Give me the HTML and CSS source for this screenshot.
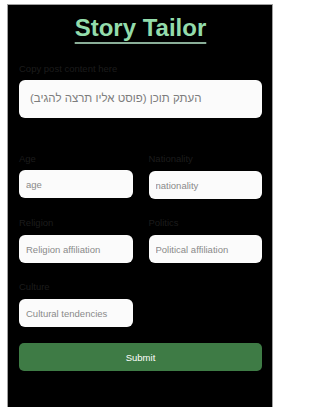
FILE: index.html
```html
<!DOCTYPE html>
<html lang="en">
<head>
<meta charset="utf-8">
<title>Story Tailor</title>
<link rel="stylesheet" href="styles.css">
</head>
<body>
<main class="panel">
  <h1 class="title"><span class="title-text">Story Tailor</span></h1>
  <form class="form">
    <div class="field">
      <label class="label" for="post">Copy post content here</label>
      <textarea id="post" class="post" placeholder="העתק תוכן (פוסט אליו תרצה להגיב)"></textarea>
    </div>
    <div class="grid">
      <div class="field">
        <label class="label" for="age">Age</label>
        <input id="age" class="input" type="text" placeholder="age">
      </div>
      <div class="field">
        <label class="label" for="nat">Nationality</label>
        <input id="nat" class="input" type="text" placeholder="nationality">
      </div>
      <div class="field">
        <label class="label" for="rel">Religion</label>
        <input id="rel" class="input" type="text" placeholder="Religion affiliation">
      </div>
      <div class="field">
        <label class="label" for="pol">Politics</label>
        <input id="pol" class="input" type="text" placeholder="Political affiliation">
      </div>
      <div class="field">
        <label class="label" for="cul">Culture</label>
        <input id="cul" class="input" type="text" placeholder="Cultural tendencies">
      </div>
    </div>
    <button class="submit" type="button">Submit</button>
  </form>
</main>
</body>
</html>
```

FILE: styles.css
```css
* { box-sizing: border-box; }

html, body {
  margin: 0;
  padding: 0;
  background: #ffffff;
  overflow: hidden;
}

body {
  font-family: "Liberation Sans", Arial, "DejaVu Sans", sans-serif;
}

.panel {
  margin: 4px 0 0 7px;
  width: 266px;
  min-height: 420px;
  background: #000000;
  border: 1px solid #a0a0a0;
  border-bottom: none;
  padding: 0 10px 0 11px;
}

.title {
  margin: 9px 0 0 0;
  text-align: center;
  font-size: 24px;
  line-height: 28px;
  font-weight: bold;
  color: #93dcab;
}

.title-text {
  text-decoration: underline;
  text-decoration-color: #8aae98;
  text-decoration-thickness: 2px;
  text-underline-offset: 6px;
}

.form {
  display: flex;
  flex-direction: column;
  margin-top: 21px;
}

.field {
  display: flex;
  flex-direction: column;
}

.label {
  font-size: 9.5px;
  line-height: 12px;
  color: #1c1c1c;
  margin-bottom: 6px;
}

.field:first-child .label {
  margin-bottom: 5px;
}

.post {
  height: 38px;
  border: none;
  border-radius: 6px;
  background: #fbfbfb;
  padding: 11px 11px;
  font-family: "Liberation Sans", Arial, "DejaVu Sans", sans-serif;
  font-size: 11.5px;
  line-height: 14px;
  resize: none;
  color: #222;
  outline: none;
  overflow: hidden;
}

.post::placeholder {
  color: #7d7d7d;
}

.grid {
  display: grid;
  grid-template-columns: 1fr 1fr;
  column-gap: 16px;
  row-gap: 18px;
  margin-top: 35px;
}

.input {
  height: 28px;
  border: none;
  border-radius: 6px;
  background: #fbfbfb;
  padding: 0 7px;
  font-family: "Liberation Sans", Arial, "DejaVu Sans", sans-serif;
  font-size: 9.5px;
  color: #222;
  outline: none;
  width: 100%;
}

.input::placeholder {
  color: #8a8a8a;
}

.submit {
  margin-top: 16px;
  height: 28px;
  border: none;
  border-radius: 5px;
  background: #3e7b45;
  color: #ffffff;
  font-family: "Liberation Sans", Arial, "DejaVu Sans", sans-serif;
  font-size: 9.5px;
}
```
